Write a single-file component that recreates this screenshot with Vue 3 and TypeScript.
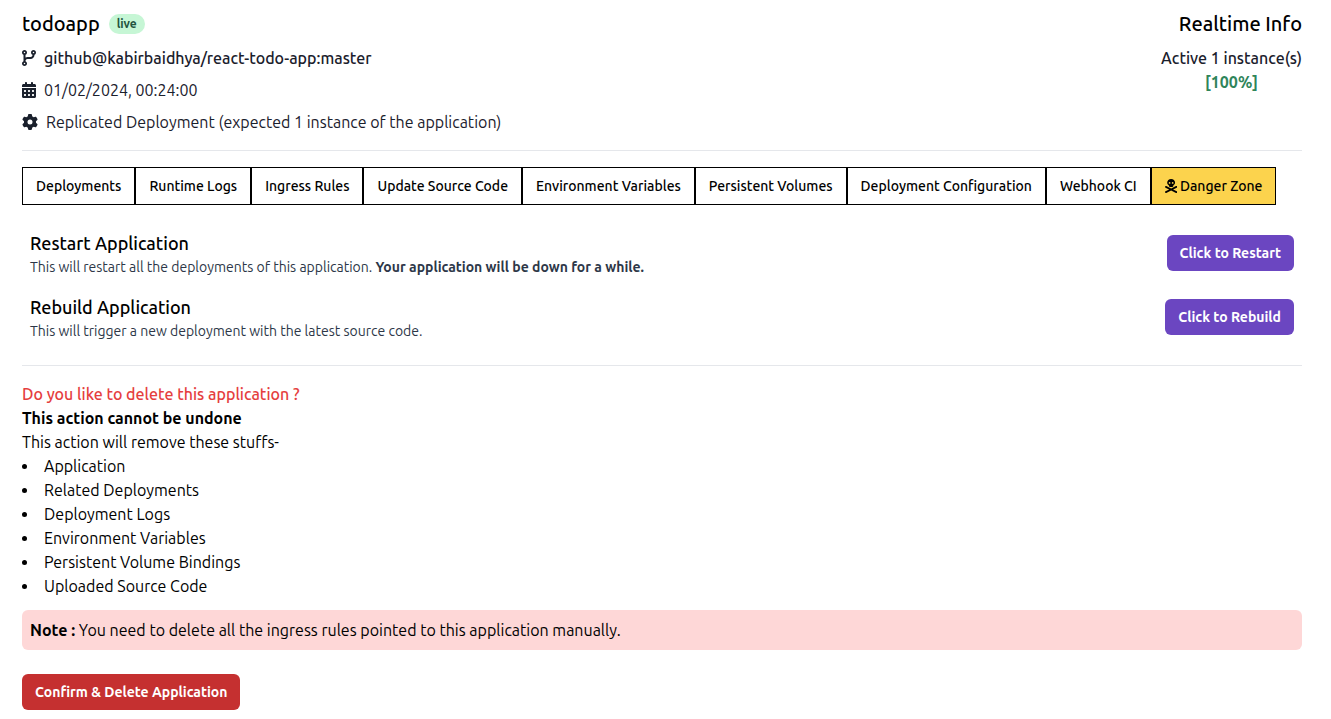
<script setup lang="ts">
interface Tab {
  label: string
  danger?: boolean
}

interface Action {
  title: string
  text: string
  warning?: string
  button: string
}

const tabs: Tab[] = [
  { label: 'Deployments' },
  { label: 'Runtime Logs' },
  { label: 'Ingress Rules' },
  { label: 'Update Source Code' },
  { label: 'Environment Variables' },
  { label: 'Persistent Volumes' },
  { label: 'Deployment Configuration' },
  { label: 'Webhook CI' },
  { label: 'Danger Zone', danger: true },
]

const actions: Action[] = [
  {
    title: 'Restart Application',
    text: 'This will restart all the deployments of this application.',
    warning: 'Your application will be down for a while.',
    button: 'Click to Restart',
  },
  {
    title: 'Rebuild Application',
    text: 'This will trigger a new deployment with the latest source code.',
    button: 'Click to Rebuild',
  },
]

const removed: string[] = [
  'Application',
  'Related Deployments',
  'Deployment Logs',
  'Environment Variables',
  'Persistent Volume Bindings',
  'Uploaded Source Code',
]
</script>

<template>
  <main class="page">
    <header class="header">
      <div class="summary">
        <div class="title-row">
          <h1 class="title">todoapp</h1>
          <span class="badge">live</span>
        </div>
        <div class="meta strong">
          <svg class="icon" viewBox="0 0 448 512" aria-hidden="true">
            <path fill-rule="evenodd" d="M80 104a24 24 0 1 0 0-48 24 24 0 1 0 0 48zM160 80c0 32.800-19.700 61-48 73.300v87.800c18.800-10.900 40.700-17.100 64-17.100h96c35.300 0 64-28.700 64-64v-6.700C307.700 141 288 112.800 288 80c0-44.200 35.800-80 80-80s80 35.800 80 80c0 32.800-19.700 61-48 73.300V160c0 70.700-57.300 128-128 128H176c-35.300 0-64 28.700-64 64v6.700c28.300 12.300 48 40.500 48 73.300c0 44.200-35.800 80-80 80s-80-35.800-80-80c0-32.800 19.700-61 48-73.300V153.300C19.700 141 0 112.800 0 80C0 35.800 35.800 0 80 0s80 35.800 80 80zM392 80a24 24 0 1 0-48 0 24 24 0 1 0 48 0zM80 456a24 24 0 1 0 0-48 24 24 0 1 0 0 48z" />
          </svg>
          <span>github@kabirbaidhya/react-todo-app:master</span>
        </div>
        <div class="meta">
          <svg class="icon" viewBox="0 0 448 512" aria-hidden="true">
            <path fill-rule="evenodd" d="M128 0c17.700 0 32 14.300 32 32V64H288V32c0-17.700 14.300-32 32-32s32 14.300 32 32V64h48c26.500 0 48 21.500 48 48v48H0V112C0 85.500 21.500 64 48 64H96V32c0-17.700 14.300-32 32-32zM0 192H448V464c0 26.500-21.500 48-48 48H48c-26.500 0-48-21.500-48-48V192zM64 272v32c0 8.800 7.200 16 16 16h32c8.800 0 16-7.200 16-16V272c0-8.800-7.200-16-16-16H80c-8.800 0-16 7.200-16 16zM192 272v32c0 8.800 7.200 16 16 16h32c8.800 0 16-7.200 16-16V272c0-8.800-7.200-16-16-16H208c-8.800 0-16 7.200-16 16zM320 272v32c0 8.800 7.200 16 16 16h32c8.800 0 16-7.200 16-16V272c0-8.800-7.200-16-16-16H336c-8.800 0-16 7.200-16 16zM64 400v32c0 8.800 7.200 16 16 16h32c8.800 0 16-7.200 16-16V400c0-8.800-7.200-16-16-16H80c-8.800 0-16 7.200-16 16zM192 400v32c0 8.800 7.200 16 16 16h32c8.800 0 16-7.200 16-16V400c0-8.800-7.200-16-16-16H208c-8.800 0-16 7.200-16 16zM320 400v32c0 8.800 7.200 16 16 16h32c8.800 0 16-7.200 16-16V400c0-8.800-7.200-16-16-16H336c-8.800 0-16 7.200-16 16z" />
          </svg>
          <span>01/02/2024, 00:24:00</span>
        </div>
        <div class="meta">
          <svg class="icon" viewBox="0 0 512 512" aria-hidden="true">
            <path fill-rule="evenodd" d="M495.900 166.600c3.200 8.700 .5 18.400-6.400 24.600l-43.300 39.400c1.100 8.300 1.700 16.800 1.700 25.400s-.6 17.100-1.700 25.400l43.300 39.400c6.900 6.200 9.600 15.900 6.400 24.600c-4.400 11.900-9.700 23.300-15.800 34.300l-4.700 8.100c-6.600 11-14 21.400-22.100 31.200c-5.900 7.200-15.700 9.600-24.500 6.800l-55.700-17.700c-13.400 10.300-28.200 18.900-44 25.400l-12.500 57.100c-2 9.100-9 16.300-18.200 17.800c-13.800 2.300-28 3.500-42.500 3.500s-28.700-1.200-42.500-3.500c-9.200-1.500-16.200-8.700-18.200-17.800l-12.500-57.100c-15.800-6.500-30.600-15.100-44-25.400L83.100 425.900c-8.800 2.800-18.600 .3-24.500-6.800c-8.100-9.800-15.500-20.200-22.100-31.200l-4.700-8.100c-6.100-11-11.400-22.400-15.800-34.300c-3.200-8.700-.5-18.400 6.400-24.600l43.300-39.400C64.600 273.100 64 264.600 64 256s.6-17.100 1.700-25.400L22.400 191.200c-6.900-6.200-9.600-15.900-6.400-24.600c4.400-11.900 9.700-23.300 15.800-34.300l4.700-8.100c6.600-11 14-21.400 22.100-31.200c5.900-7.200 15.700-9.600 24.500-6.800l55.700 17.700c13.400-10.300 28.200-18.900 44-25.400l12.500-57.100c2-9.100 9-16.300 18.200-17.800C227.300 1.200 241.500 0 256 0s28.700 1.200 42.500 3.500c9.200 1.500 16.200 8.700 18.200 17.800l12.500 57.100c15.800 6.500 30.600 15.100 44 25.400l55.700-17.700c8.800-2.800 18.600-.3 24.500 6.800c8.100 9.800 15.500 20.200 22.100 31.200l4.700 8.100c6.100 11 11.400 22.400 15.800 34.300zM256 336a80 80 0 1 0 0-160 80 80 0 1 0 0 160z" />
          </svg>
          <span>Replicated Deployment (expected 1 instance of the application)</span>
        </div>
      </div>
      <div class="realtime">
        <h2 class="title">Realtime Info</h2>
        <div class="status">
          <p class="instances">Active 1 instance(s)</p>
          <p class="health">[100%]</p>
        </div>
      </div>
    </header>

    <hr class="rule" />

    <nav class="tabs" aria-label="Application sections">
      <button v-for="tab in tabs" :key="tab.label" type="button" class="tab" :class="{ danger: tab.danger }">
        <svg v-if="tab.danger" class="skull" viewBox="0 0 448 512" aria-hidden="true">
          <path fill-rule="evenodd" d="M368 128c0 44.400-25.400 83.500-64 106.400V256c0 17.700-14.300 32-32 32H176c-17.700 0-32-14.300-32-32V234.400c-38.600-23-64-62.100-64-106.400C80 57.300 144.500 0 224 0s144 57.300 144 128zM168 176a32 32 0 1 0 0-64 32 32 0 1 0 0 64zM312 144a32 32 0 1 0-64 0 32 32 0 1 0 64 0z" />
          <path d="M3.400 273.700c7.900-15.800 27.100-22.200 42.900-14.300L224 348.200l177.700-88.800c15.800-7.900 35-1.500 42.900 14.300s1.500 35-14.300 42.900L295.600 384l134.800 67.400c15.800 7.900 22.200 27.100 14.300 42.900s-27.100 22.200-42.900 14.300L224 419.800 46.300 508.600c-15.800 7.900-35 1.500-42.900-14.300s-1.500-35 14.300-42.900L152.400 384 17.700 316.600C1.900 308.700-4.500 289.500 3.400 273.700z" />
        </svg>
        <span>{{ tab.label }}</span>
      </button>
    </nav>

    <section class="actions">
      <div v-for="action in actions" :key="action.title" class="action">
        <div>
          <h3 class="action-title">{{ action.title }}</h3>
          <p class="action-text">
            {{ action.text }}
            <strong v-if="action.warning">{{ action.warning }}</strong>
          </p>
        </div>
        <button type="button" class="button primary">{{ action.button }}</button>
      </div>
    </section>

    <hr class="rule" />

    <section class="delete">
      <p class="question">Do you like to delete this application ?</p>
      <p class="bold">This action cannot be undone</p>
      <p>This action will remove these stuffs-</p>
      <ul class="list">
        <li v-for="item in removed" :key="item">{{ item }}</li>
      </ul>
      <p class="note"><b>Note :</b> You need to delete all the ingress rules pointed to this application manually.</p>
      <button type="button" class="button destructive">Confirm &amp; Delete Application</button>
    </section>
  </main>
</template>

<style>
body {
  margin: 0;
  background: #ffffff;
}
</style>

<style scoped>
.page {
  padding: 10px 29px 8px 22px;
  font-family: Ubuntu, 'Noto Sans', sans-serif;
  font-size: 16px;
  line-height: 24px;
  color: #000000;
}

h1,
h2,
h3,
p,
ul {
  margin: 0;
  padding: 0;
}

.header {
  display: flex;
  justify-content: space-between;
}

.summary,
.realtime {
  display: flex;
  flex-direction: column;
  gap: 8px;
}

.title-row {
  display: flex;
  align-items: center;
  gap: 9px;
}

.title {
  font-size: 20px;
  line-height: 28px;
  font-weight: 500;
}

.badge {
  padding: 0 8px;
  border-radius: 10px;
  background: #c6f6d5;
  color: #22543d;
  font-size: 12px;
  line-height: 20px;
  font-weight: 700;
}

.meta {
  display: flex;
  align-items: center;
  gap: 8px;
  color: #1a202c;
}

.strong {
  font-weight: 500;
}

.icon {
  height: 16px;
  fill: #1a202c;
}

.realtime {
  align-items: flex-end;
}

.status {
  text-align: center;
}

.instances {
  font-weight: 500;
  color: #1a202c;
}

.health {
  font-weight: 700;
  color: #2f855a;
}

.rule {
  height: 1px;
  margin: 16px 0;
  border: 0;
  background: #e5e7eb;
}

.tabs {
  display: flex;
}

.tab {
  display: flex;
  align-items: center;
  gap: 3px;
  padding: 8px 13px;
  border: 1px solid #000000;
  background: #ffffff;
  color: #000000;
  font-family: inherit;
  font-size: 14px;
  line-height: 20px;
  font-weight: 500;
  white-space: nowrap;
}

.danger {
  background: #fcd34d;
}

.skull {
  height: 14px;
}

.actions {
  margin-top: 16px;
}

.action {
  display: flex;
  align-items: center;
  justify-content: space-between;
  padding: 8px;
}

.action-title {
  font-size: 18px;
  line-height: 28px;
  font-weight: 500;
}

.action-text {
  font-size: 14px;
  line-height: 20px;
  color: #2d3748;
}

.button {
  padding: 8px 13px;
  border: 0;
  border-radius: 6px;
  color: #ffffff;
  font-family: inherit;
  font-size: 14px;
  line-height: 20px;
  font-weight: 700;
}

.primary {
  background: #6b46c1;
}

.destructive {
  margin-top: 24px;
  background: #c53030;
}

.question {
  font-weight: 500;
  color: #e53e3e;
}

.bold {
  font-weight: 700;
}

.list {
  list-style: disc inside;
}

.note {
  margin-top: 12px;
  padding: 8px;
  border-radius: 6px;
  background: #fed7d7;
}
</style>
